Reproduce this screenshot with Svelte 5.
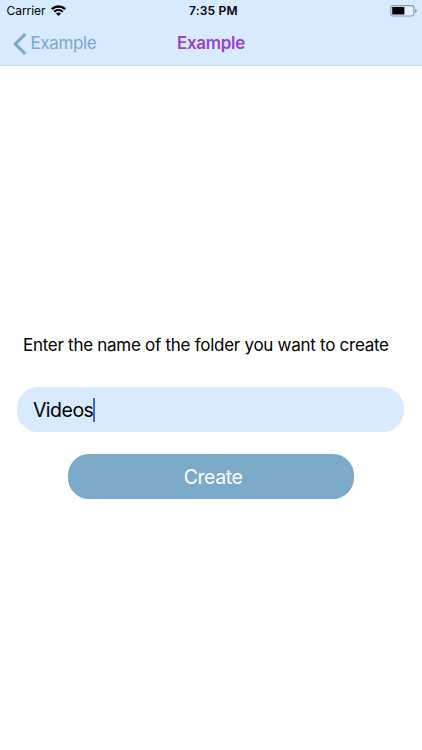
<script>
  let folder = $state('Videos');
</script>

<div class="screen">
  <header>
    <div class="status">
      <div class="carrier">
        <span class="carrier-name">Carrier</span>
        <svg class="wifi" width="15" height="11" viewBox="0 0 15 11" fill="none" stroke="#000">
          <path d="M.8 4.2C4.6.6 10.4.6 14.2 4.2" stroke-width="2.3" />
          <path d="M3.2 6.7C5.7 4.5 9.3 4.5 11.8 6.7" stroke-width="2" />
          <path d="M5 8.5Q7.5 6.5 10 8.5L7.5 11Z" fill="#000" stroke="none" />
        </svg>
      </div>
      <span class="time">7:35 PM</span>
      <svg class="battery" width="28" height="12" viewBox="0 0 28 12">
        <rect x=".8" y=".6" width="23.2" height="10.4" rx="2.5" fill="#e4f1ff" stroke="#8d99a5" stroke-width="1.1" />
        <rect x="2.2" y="2" width="12.2" height="7.6" rx=".5" fill="#000" />
        <path d="M25.1 4v4q1.6-.6 1.6-2t-1.6-2Z" fill="#8d99a5" />
      </svg>
    </div>
    <nav>
      <div class="back">
        <svg width="14" height="22" viewBox="0 0 14 22" fill="none" stroke="#7ba9c8" stroke-width="3.1">
          <path d="M12.2 1.2 2.3 11l9.9 9.8" />
        </svg>
        <span class="back-label">Example</span>
      </div>
      <span class="title">Example</span>
    </nav>
  </header>
  <main>
    <p><span class="prompt">Enter the name of the folder you want to create</span></p>
    <div class="field"><span class="value">{folder}</span><i class="caret"></i></div>
    <div class="button"><span class="action">Create</span></div>
  </main>
</div>

<style>
  :global(body) { margin: 0; background: #fff; }
  .screen {
    width: 422px;
    height: 750px;
    overflow: hidden;
    background: #fff;
    color: #000;
    font-family: Inter, "Liberation Sans", sans-serif;
    white-space: nowrap;
  }
  header {
    box-sizing: border-box;
    height: 66px;
    background: #d7eaff;
    border-bottom: 1px solid #c8d8e6;
  }
  .status {
    display: grid;
    grid-template-columns: 189px 1fr 32px;
    align-items: center;
    height: 22px;
    font-size: 12px;
    line-height: 22px;
  }
  .carrier { display: flex; align-items: center; padding-left: 6.5px; }
  .carrier-name { width: 44px; letter-spacing: -.05px; }
  .wifi { margin-bottom: 1.5px; }
  .time { font-weight: 600; letter-spacing: .2px; }
  .battery { display: block; }
  nav {
    display: grid;
    grid-template-columns: 177px 1fr;
    height: 43px;
    line-height: 43px;
    font-size: 17px;
  }
  .back { display: flex; align-items: center; padding-left: 12.5px; color: #7ba9c8; }
  .back-label { margin-left: 4px; letter-spacing: -.38px; }
  .title { color: #9843cd; font-weight: 600; letter-spacing: -.3px; }
  main { padding-top: 262px; }
  p { margin: 0; height: 34px; padding-left: 23px; line-height: 34px; font-size: 17px; }
  .prompt { letter-spacing: -.275px; }
  .field {
    display: flex;
    align-items: center;
    box-sizing: border-box;
    width: 387px;
    height: 45px;
    margin: 25px 0 0 17.4px;
    padding-left: 15.5px;
    border-radius: 21px;
    background: #d7eaff;
    font-size: 19.5px;
  }
  .value { letter-spacing: -.5px; }
  .caret { width: 2px; height: 24px; background: #4264dc; }
  .button {
    display: flex;
    align-items: center;
    justify-content: center;
    box-sizing: border-box;
    width: 286px;
    height: 45px;
    margin: 22px 0 0 68px;
    padding-left: 4px;
    border-radius: 21px;
    background: #7ba9c8;
    color: #fff;
    font-size: 19.5px;
  }
  .action { letter-spacing: -.45px; }
</style>
